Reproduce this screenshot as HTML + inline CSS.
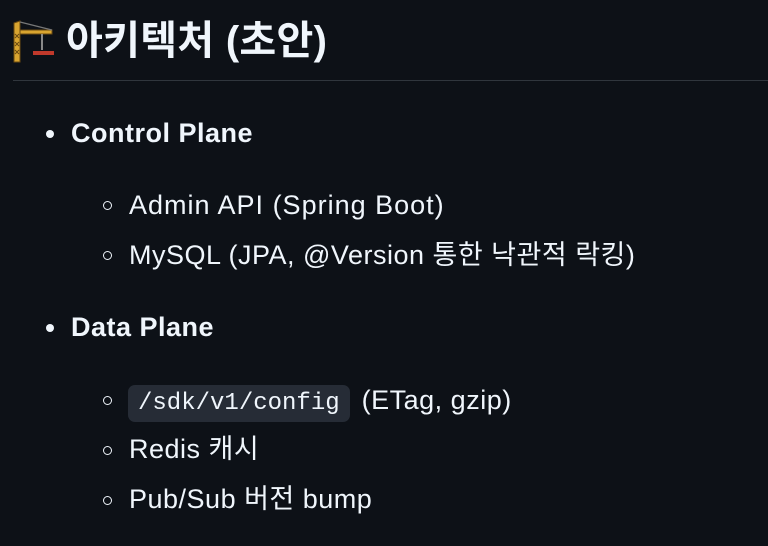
<!DOCTYPE html>
<html><head><meta charset="utf-8"><style>
body{margin:0;width:768px;height:546px;background:#0d1117;color:#f0f6fc;font-family:"Liberation Sans","Noto Sans CJK KR",sans-serif;position:relative;overflow:hidden}
.l{position:absolute;white-space:nowrap;font-size:27px;line-height:30px;letter-spacing:0.5px}
.b{font-weight:bold}
.d{position:absolute;width:8px;height:8px;border-radius:50%;background:#f0f6fc}
.c{position:absolute;width:7px;height:7px;border-radius:50%;border:1.5px solid #f0f6fc}
code{font-family:"Liberation Mono",monospace;font-size:24px;letter-spacing:0;background:#262c36;border-radius:7px;padding:5px 10px;margin-right:4px}
</style></head><body>
<svg style="position:absolute;left:12px;top:20px" width="44" height="44" viewBox="0 0 44 44">
<path d="M2 3 L8 1 L8 42 L2 42 Z" fill="#d9a530" stroke="#6b4a10" stroke-width="1"/>
<path d="M3 14 L7 18 M7 14 L3 18 M3 22 L7 26 M7 22 L3 26 M3 30 L7 34 M7 30 L3 34" stroke="#6b4a10" stroke-width="1"/>
<path d="M8 10 L40 10 L40 14 L8 14Z" fill="#d9a530" stroke="#6b4a10" stroke-width="1"/>
<path d="M8 2 L40 10" stroke="#777" stroke-width="1.2"/>
<rect x="29" y="14" width="2" height="16" fill="#888"/>
<rect x="21" y="31" width="21" height="4" fill="#c0392b"/>
</svg>
<div class="l b" style="left:66px;top:18px;font-size:40px;line-height:46px;letter-spacing:0.3px">아키텍처 (초안)</div>
<div style="position:absolute;left:13px;right:0;top:80px;height:1px;background:#30363d"></div>
<div class="d" style="left:46px;top:130px"></div><div class="l b" style="left:71px;top:118px">Control Plane</div>
<div class="c" style="left:103px;top:201px"></div><div class="l" style="left:129px;top:190px;letter-spacing:1px">Admin API (Spring Boot)</div>
<div class="c" style="left:103px;top:251px"></div><div class="l" style="left:129px;top:240px">MySQL (JPA, @Version 통한 낙관적 락킹)</div>
<div class="d" style="left:46px;top:324px"></div><div class="l b" style="left:71px;top:312px">Data Plane</div>
<div class="c" style="left:103px;top:396px"></div><div class="l" style="left:128px;top:385px"><code>/sdk/v1/config</code> (ETag, gzip)</div>
<div class="c" style="left:103px;top:446px"></div><div class="l" style="left:129px;top:434px">Redis 캐시</div>
<div class="c" style="left:103px;top:496px"></div><div class="l" style="left:129px;top:484px">Pub/Sub 버전 bump</div>
</body></html>
